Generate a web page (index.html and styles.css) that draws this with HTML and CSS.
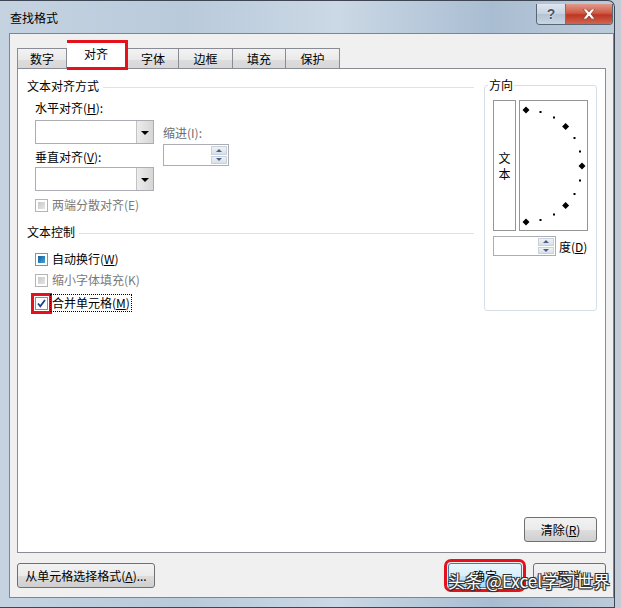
FILE: index.html
```html
<!DOCTYPE html>
<html>
<head>
  <title>查找格式</title>
  <link rel="stylesheet" href="styles.css">
</head>
<body>
  <div class="window">
    <div class="titlebar">
      <span class="title">查找格式</span>
      <div class="caption-btns">
        <span class="cap-help">?</span>
        <span class="cap-close">
          <svg width="14" height="10" viewBox="0 0 14 10"><path d="M1 0h3.5l2.5 3 2.5-3H13L9 5l4 5H9.5L7 7l-2.5 3H1l4-5z" fill="#fff" stroke="#6b2219" stroke-width="0.6"/></svg>
        </span>
      </div>
    </div>

    <div class="client">
      <div class="tabs">
        <div class="tab tab-w50">数字</div>
        <div class="tab tab-active">对齐</div>
        <div class="tab tab-w51">字体</div>
        <div class="tab tab-w54">边框</div>
        <div class="tab tab-w53">填充</div>
        <div class="tab tab-w54">保护</div>
      </div>

      <div class="panel">
        <div class="panel-body">
          <div class="align-col">
            <div class="group-head"><span>文本对齐方式</span><i class="rule"></i></div>
            <div class="align-row">
              <div class="align-left">
                <div class="lbl">水平对齐(<u>H</u>):</div>
                <div class="combo"><span class="combo-btn"><i class="tri-down"></i></span></div>
                <div class="lbl lbl-v">垂直对齐(<u>V</u>):</div>
                <div class="combo combo-v"><span class="combo-btn"><i class="tri-down"></i></span></div>
              </div>
              <div class="indent">
                <div class="lbl lbl-dim">缩进(I):</div>
                <div class="spin spin-indent">
                  <span class="spin-btns"><b class="up"></b><b class="down"></b></span>
                </div>
              </div>
            </div>
            <div class="check check-first disabled"><span class="box box-grey"></span><span>两端分散对齐(E)</span></div>

            <div class="group-head group-gap"><span>文本控制</span><i class="rule"></i></div>
            <div class="check check-wrap"><span class="box box-mixed"></span><span>自动换行(<u>W</u>)</span></div>
            <div class="check check-shrink disabled"><span class="box box-grey"></span><span>缩小字体填充(K)</span></div>
            <div class="check check-merge"><span class="box box-checked marked">
              <svg width="9" height="9" viewBox="0 0 9 9"><path d="M1 4.5l2.3 2.8L8 1" fill="none" stroke="#1c3f94" stroke-width="1.8"/></svg>
            </span><span class="focus">合并单元格(<u>M</u>)</span></div>
          </div>

          <fieldset class="orient">
            <legend>方向</legend>
            <div class="orient-row">
              <div class="vtext"><span>文</span><span>本</span></div>
              <div class="dial">
                <svg width="67" height="129" viewBox="0 0 67 129">
                  <g fill="#000">
                    <path d="M6 5.5l3.5 3.5-3.5 3.5-3.5-3.5z"/>
                    <path d="M45.6 21.9l3.5 3.5-3.5 3.5-3.5-3.5z"/>
                    <path d="M62 61.5l3.5 3.5-3.5 3.5-3.5-3.5z"/>
                    <path d="M45.6 101.1l3.5 3.5-3.5 3.5-3.5-3.5z"/>
                    <path d="M6 117.5l3.5 3.5-3.5 3.5-3.5-3.5z"/>
                    <rect x="19.5" y="10" width="2" height="2"/>
                    <rect x="33" y="15.5" width="2" height="2"/>
                    <rect x="53.5" y="36" width="2" height="2"/>
                    <rect x="59" y="49.5" width="2" height="2"/>
                    <rect x="59" y="78.5" width="2" height="2"/>
                    <rect x="53.5" y="92" width="2" height="2"/>
                    <rect x="33" y="112.5" width="2" height="2"/>
                    <rect x="19.5" y="118" width="2" height="2"/>
                  </g>
                </svg>
              </div>
            </div>
            <div class="deg-row">
              <div class="spin spin-deg">
                <span class="spin-btns"><b class="up"></b><b class="down"></b></span>
              </div>
              <span class="deg-lbl">度(<u>D</u>)</span>
            </div>
          </fieldset>
        </div>

        <div class="panel-foot">
          <button class="btn btn-clear">清除(<u>R</u>)</button>
        </div>
      </div>

      <div class="dialog-foot">
        <button class="btn btn-pick">从单元格选择格式(<u>A</u>)...</button>
        <button class="btn btn-default btn-ok marked">确定</button>
        <button class="btn btn-cancel">取消</button>
      </div>
    </div>

    <div class="watermark">头条 @Excel学习世界</div>
  </div>
</body>
</html>
```

FILE: styles.css
```css
body { margin: 0; background: #c3ccd6; font-family: "Noto Sans CJK SC", "Noto Sans", sans-serif; font-size: 12px; color: #000; }
u { text-decoration: underline; text-underline-offset: 1px; }

.window { position: relative; width: 615px; height: 608px; box-sizing: border-box; border: 1px solid #3d4652; border-left: none; border-radius: 0 7px 0 0;
  background: linear-gradient(to right, #c5d3e1 0%, #b9cadb 30%, #cbd8e5 55%, #a9bdd2 80%, #bccbda 100%); }

.titlebar { height: 32px; display: flex; align-items: flex-start; }
.title { margin: 9px 0 0 10px; line-height: 16px; }
.caption-btns { margin-left: auto; margin-right: 1px; margin-top: 3px; display: flex; height: 20px; border: 1px solid #5b6673; border-top: none; border-radius: 0 0 4px 4px; overflow: hidden; }
.cap-help { width: 28px; display: flex; align-items: center; justify-content: center; font: bold 14px "Liberation Sans", sans-serif; color: #4e5866;
  background: linear-gradient(#dfe7ef, #c5d2df 50%, #b3c3d3 51%, #c8d6e4); border-right: 1px solid #6b7684; text-shadow: 0 0 2px #fff; }
.cap-close { width: 46px; display: flex; align-items: center; justify-content: center;
  background: linear-gradient(#e09a8c, #cf5a45 45%, #bd3622 55%, #d2654f); }

.client { margin-left: 9px; width: 605px; height: 565px; box-sizing: border-box; border: 1px solid #76879a; background: #f0f0f0; padding: 6px 7px 0 7px; }

.tabs { display: flex; align-items: flex-end; height: 30px; }
.tab { height: 22px; box-sizing: border-box; border: 1px solid #898c95; border-bottom: none; padding-top: 2px; text-align: center; line-height: 16px;
  background: linear-gradient(#f3f3f3, #e9e9e9 50%, #dcdcdc 51%, #d7d7d7); }
.tab + .tab { border-left: none; }
.tab-w50 { width: 50px; }
.tab-w51 { width: 51px; }
.tab-w53 { width: 53px; }
.tab-w54 { width: 54px; }
.tab-active { position: relative; z-index: 2; width: 61px; height: 30px; border: 3px solid #e5121d; background: #fff; padding-top: 3px; }

.panel { position: relative; margin-top: -2px; height: 485px; box-sizing: border-box; border: 1px solid #898c95; background: #fff; display: flex; flex-direction: column; }
.panel-body { display: flex; padding-right: 8px; }
.panel-foot { margin-top: auto; display: flex; justify-content: flex-end; padding: 0 8px 10px 0; }

.align-col { flex: 1; padding: 9px 10px 0 9px; }
.group-head { display: flex; align-items: center; line-height: 16px; }
.group-head .rule { flex: 1; height: 1px; background: #dde2e8; margin-left: 4px; margin-top: 2px; }
.group-gap { margin-top: 11px; }

.align-row { display: flex; gap: 9px; margin-top: 6px; padding-left: 8px; }
.align-left { width: 119px; }
.lbl { line-height: 16px; }
.lbl-v { margin-top: 5px; }
.lbl-dim { color: #6d6d6d; }
.combo { margin-top: 4px; height: 24px; box-sizing: border-box; border: 1px solid #abadb3; background: #fff; display: flex; justify-content: flex-end; }
.combo-v { margin-top: 2px; }
.combo-btn { width: 16px; display: flex; align-items: center; justify-content: center; border-left: 1px solid #c3c3c3;
  background: linear-gradient(to right, #ececec, #d6d6d6); }
.tri-down { width: 0; height: 0; border-left: 4px solid transparent; border-right: 4px solid transparent; border-top: 4px solid #000; margin-top: 1px; }

.indent { padding-top: 25px; }
.spin { height: 22px; box-sizing: border-box; border: 1px solid #abadb3; background: #fff; display: flex; justify-content: flex-end; padding: 1px; }
.spin-indent { width: 66px; margin-top: 3px; }
.spin-btns { width: 16px; display: flex; flex-direction: column; gap: 1px; }
.spin-btns b { flex: 1; display: flex; align-items: center; justify-content: center; background: linear-gradient(#eef2f6, #d8e0e8); border: 1px solid #c9d2dc; }
.spin-btns .up::after { content: ""; border-left: 3px solid transparent; border-right: 3px solid transparent; border-bottom: 3px solid #48618b; }
.spin-btns .down::after { content: ""; border-left: 3px solid transparent; border-right: 3px solid transparent; border-top: 3px solid #48618b; }

.check { display: flex; align-items: center; gap: 4px; line-height: 16px; padding-left: 8px; }
.check-first { margin-top: 6px; }
.check-wrap { margin-top: 11px; }
.check-shrink { margin-top: 5px; }
.check-merge { margin-top: 7px; }
.disabled { color: #7a7a7a; }
.box { width: 13px; height: 13px; box-sizing: border-box; border: 1px solid #8e8f8f; background: #fff; display: flex; align-items: center; justify-content: center; }
.box-grey { border-color: #b4b4b4; padding: 2px; }
.box-grey::after { content: ""; flex: 1; align-self: stretch; background: linear-gradient(135deg, #c9c9c9, #e4e4e4); }
.box-mixed { padding: 2px; }
.box-mixed::after { content: ""; flex: 1; align-self: stretch; background: linear-gradient(135deg, #1b5f97, #3ea3da); }
.marked { outline: 3px solid #e5121d; outline-offset: 1px; }
.focus { outline: 1px dotted #000; padding: 0 1px; margin-left: -1px; }

.orient { margin: 8px 0 0 0; width: 113px; box-sizing: border-box; border: 1px solid #d5dfe5; border-radius: 3px; padding: 7px 8px 6px 8px; }
.orient legend { padding: 0 1px; margin-left: -5px; line-height: 16px; }
.orient-row { display: flex; gap: 3px; height: 131px; }
.vtext { width: 23px; box-sizing: border-box; border: 1px solid #959595; display: flex; flex-direction: column; align-items: center; justify-content: center; line-height: 16px; }
.dial { width: 69px; box-sizing: border-box; border: 1px solid #959595; }
.dial svg { display: block; }
.deg-row { display: flex; align-items: center; margin-top: 5px; white-space: nowrap; }
.spin-deg { width: 63px; height: 20px; flex: none; }
.deg-lbl { margin-left: 3px; }

.btn { height: 25px; box-sizing: border-box; border: 1px solid #707070; border-radius: 3px; font: inherit; color: #000; padding: 0;
  background: linear-gradient(#f2f2f2, #ebebeb 50%, #dddddd 51%, #cfcfcf); }
.btn-clear { width: 73px; }
.btn-default { border-color: #3c7fb1; background: linear-gradient(#eaf6fd, #d9f0fc 50%, #bee6fd 51%, #a7d9f5); }

.dialog-foot { display: flex; margin-top: 10px; }
.btn-pick { width: 138px; }
.btn-ok { margin-left: auto; width: 74px; }
.btn-cancel { margin-left: 11px; width: 73px; }

.watermark { position: absolute; z-index: 3; left: 448px; top: 568px; font-size: 17px; line-height: 24px; color: #fff; white-space: nowrap;
  text-shadow: 1px 1px 0 #333, -1px -1px 0 #333, 1px -1px 0 #333, -1px 1px 0 #333, 0 1px 1px #000; }
```
